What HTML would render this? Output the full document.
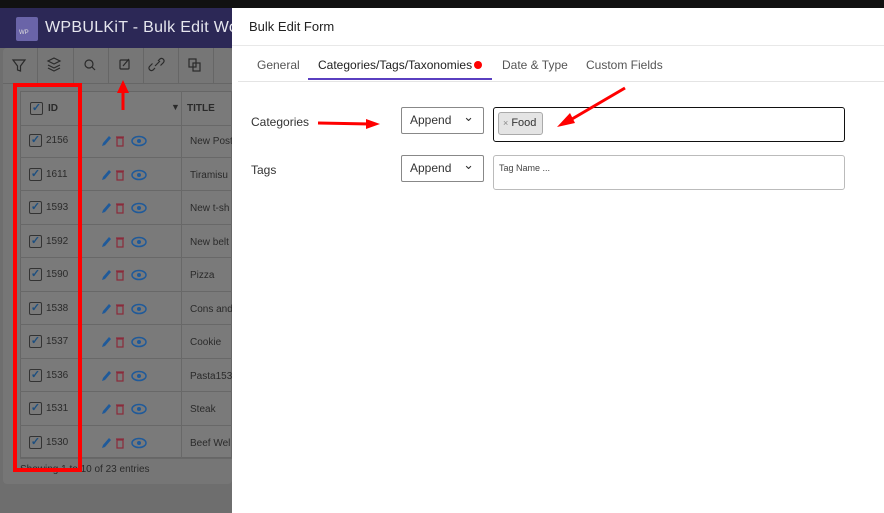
<!DOCTYPE html>
<html><head><style>
*{margin:0;padding:0;box-sizing:border-box}
body{width:884px;height:513px;overflow:hidden;position:relative;background:#6e6e6e;font-family:"Liberation Sans",sans-serif}
.abs{position:absolute}
.top{left:0;top:0;width:884px;height:8px;background:#111}
.hdr{left:0;top:8px;width:232px;height:40px;background:#2c2856;color:#e6e6ee;font-size:16px;line-height:40px;padding-left:45px;white-space:nowrap;overflow:hidden;letter-spacing:.3px}
.logo{left:16px;top:17px;width:22px;height:24px;background:#6a64a8;border-radius:2px;font-size:6px;color:#ddd;padding:13px 0 0 3px}
.card{left:3px;top:48px;width:229px;height:436px;background:#767676;border-radius:4px}
.tb{left:3px;top:48px;width:229px;height:36px;border-bottom:1px solid #666}
.tb div{position:absolute;top:0;width:1px;height:36px;background:#666}
.tbl{left:20px;top:91px;width:212px;height:367px;background:#7a7a7a;border:1px solid #666}
.row{position:absolute;left:0;width:212px;height:33.5px;border-bottom:1px solid #686868;font-size:10px;color:#2a2a2a;white-space:nowrap}
.cb{position:absolute;left:9px;top:10px;width:13px;height:13px;border:1px solid #333;border-radius:2px;color:#1d4f80;font-size:11px;line-height:11px;text-align:center;font-weight:bold}
.panel{left:232px;top:8px;width:652px;height:505px;background:#fff}
.lbl{font-size:12px;color:#333}
.sel{border:1px solid #888;border-radius:2px;height:27px;width:83px;font-size:12px;color:#333;line-height:25px;padding-left:8px}
.sel:after{content:"⌄";position:absolute;right:9px;top:-4px;font-size:13px}
</style></head><body>
<div class="abs top"></div>
<div class="abs hdr">WPBULKiT - Bulk Edit Word</div>
<div class="abs logo">WP</div>
<div class="abs card"></div>
<div class="abs tb">
<div style="left:34px"></div><div style="left:70px"></div><div style="left:105px"></div><div style="left:140px"></div><div style="left:175px"></div><div style="left:210px"></div>
<svg class="abs" style="left:0;top:0" width="229" height="36" fill="none" stroke="#2a2a2a" stroke-width="1.2">
<path d="M10 12h12l-4.5 6v5l-3 -1v-4z"/>
<path d="M45 13l6 3 6-3-6-3z M45 17l6 3 6-3 M45 20l6 3 6-3"/>
<circle cx="86" cy="16" r="4"/><path d="M89 19l3 3"/>
<rect x="117" y="12" width="9" height="9" rx="1"/><path d="M120 18l6-7"/>
<path d="M152 20l-2 2a2.5 2.5 0 0 1-3.5-3.5l3-3 M155 13l2-2a2.5 2.5 0 0 1 3.5 3.5l-3 3 M152 18l5-5"/>
<rect x="186" y="11" width="7" height="8"/><rect x="190" y="15" width="7" height="8"/>
</svg></div>
<div class="abs tbl">
<div class="row" style="top:0"><div class="cb">✓</div><span class="abs" style="left:27px;top:11px;font-weight:bold">ID</span><span class="abs" style="left:150px;top:10px;font-size:9px">▼</span><span class="abs" style="left:166px;top:11px;font-weight:bold">TITLE</span></div>
</div>
<div class="abs" style="left:181px;top:91px;width:1px;height:367px;background:#686868"></div>
<div id="rows"></div>
<div class="abs" style="left:20px;top:464px;font-size:10px;color:#2a2a2a">Showing 1 to 10 of 23 entries</div>
<div class="abs" style="left:13px;top:83px;width:69px;height:389px;border:4px solid #f00"></div>
<svg class="abs" style="left:115px;top:80px" width="16" height="32"><path d="M8 30V10" stroke="#f00" stroke-width="3"/><path d="M2 13L8 0L14 13z" fill="#f00"/></svg>
<div class="abs panel">
<div class="abs" style="left:17px;top:11px;font-size:13px;color:#222">Bulk Edit Form</div>
<div class="abs" style="left:0;top:37px;width:652px;height:1px;background:#e8e8e8"></div>
<div class="abs" style="left:25px;top:50px;font-size:12px;color:#555">General</div>
<div class="abs" style="left:86px;top:50px;font-size:12px;color:#222">Categories/Tags/Taxonomies</div>
<div class="abs" style="left:242px;top:53px;width:8px;height:8px;border-radius:50%;background:#f00"></div>
<div class="abs" style="left:76px;top:70px;width:184px;height:2px;background:#5a3fc0"></div>
<div class="abs" style="left:270px;top:50px;font-size:12px;color:#555">Date &amp; Type</div>
<div class="abs" style="left:354px;top:50px;font-size:12px;color:#555">Custom Fields</div>
<div class="abs" style="left:6px;top:73px;width:646px;height:1px;background:#e4e4e4"></div>
<div class="abs lbl" style="left:19px;top:107px">Categories</div>
<div class="abs lbl" style="left:19px;top:155px">Tags</div>
<div class="abs sel" style="left:169px;top:99px">Append</div>
<div class="abs sel" style="left:169px;top:147px">Append</div>
<div class="abs" style="left:261px;top:99px;width:352px;height:35px;border:1px solid #111;border-radius:3px"></div>
<div class="abs" style="left:266px;top:104px;width:45px;height:23px;background:#e4e4e4;border:1px solid #aaa;border-radius:3px;font-size:11px;color:#333;line-height:21px;padding-left:4px"><span style="color:#888;font-size:9px">×</span> Food</div>
<div class="abs" style="left:261px;top:147px;width:352px;height:35px;border:1px solid #bbb;border-radius:3px;font-size:9px;color:#444;padding:7px 0 0 5px">Tag Name ...</div>
<svg class="abs" style="left:80px;top:75px" width="320" height="50">
<path d="M6 40L58 41" stroke="#f00" stroke-width="3"/><path d="M54 36L68 41L54 46z" fill="#f00"/>
<path d="M313 5L260 36" stroke="#f00" stroke-width="3"/><path d="M258 30L245 44L263 40z" fill="#f00"/>
</svg>
</div>
<script>
var ids=[2156,1611,1593,1592,1590,1538,1537,1536,1531,1530],t=["New Post","Tiramisu","New t-sh","New belt","Pizza","Cons and","Cookie","Pasta153","Steak","Beef Wel"],h="";
for(var i=0;i<10;i++){var y=124+i*33.5;h+='<div class="row" style="left:20px;top:'+y+'px"><div class="cb">✓</div><span class="abs" style="left:26px;top:11px">'+ids[i]+'</span><svg class="abs" style="left:80px;top:9px" width="50" height="16"><path d="M2 13l1-3 6-7 2 2-6 7z" fill="#1f5a9a"/><rect x="17" y="5" width="6" height="8" fill="none" stroke="#8a2a3a" stroke-width="1.2"/><path d="M16 4h8" stroke="#8a2a3a" stroke-width="1.2"/><ellipse cx="39" cy="8" rx="7" ry="4.5" fill="none" stroke="#1f5a9a" stroke-width="1.5"/><circle cx="39" cy="8" r="2" fill="#1f5a9a"/></svg><span class="abs" style="left:170px;top:12px;width:42px;overflow:hidden">'+t[i]+'</span></div>';}
document.getElementById("rows").innerHTML=h;
</script>
</body></html>
